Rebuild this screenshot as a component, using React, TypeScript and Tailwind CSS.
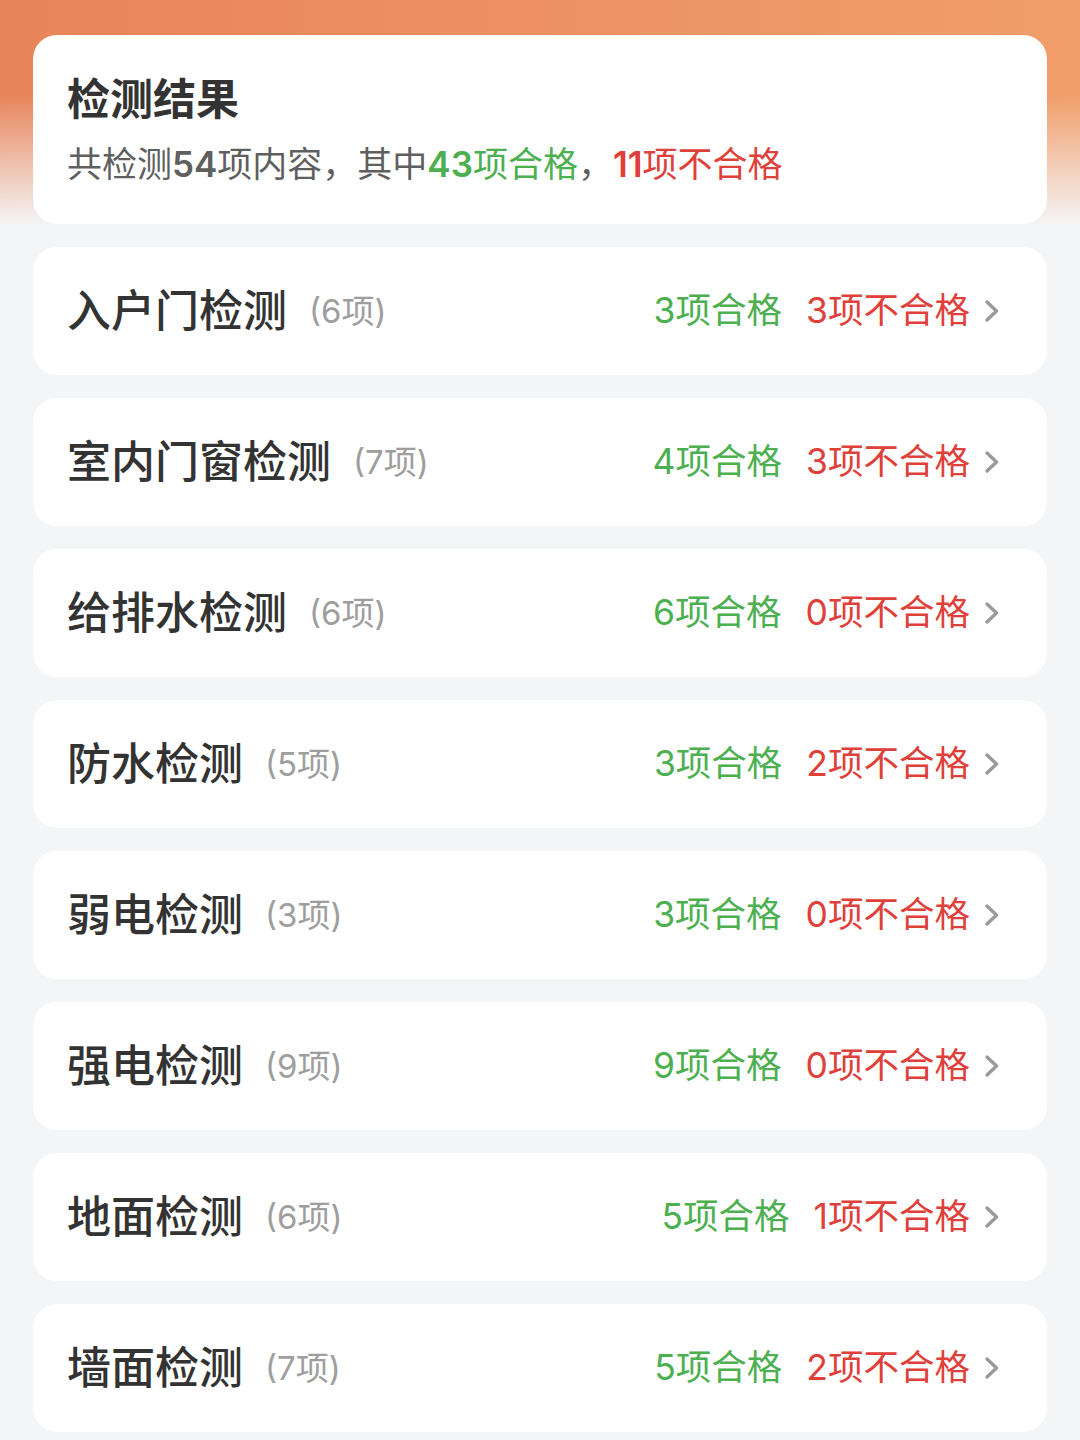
import React from "react";

type Row = { name: string; total: number; pass: number; fail: number };

const rows: Row[] = [
  { name: "入户门检测", total: 6, pass: 3, fail: 3 },
  { name: "室内门窗检测", total: 7, pass: 4, fail: 3 },
  { name: "给排水检测", total: 6, pass: 6, fail: 0 },
  { name: "防水检测", total: 5, pass: 3, fail: 2 },
  { name: "弱电检测", total: 3, pass: 3, fail: 0 },
  { name: "强电检测", total: 9, pass: 9, fail: 0 },
  { name: "地面检测", total: 6, pass: 5, fail: 1 },
  { name: "墙面检测", total: 7, pass: 5, fail: 2 },
];

function Chevron() {
  return (
    <svg width="16" height="26" viewBox="0 0 16 26" className="shrink-0">
      <polyline
        points="3,4 12.5,13 3,22"
        fill="none"
        stroke="#9a9a9a"
        strokeWidth="3.4"
        strokeLinecap="round"
        strokeLinejoin="round"
      />
    </svg>
  );
}

export default function App() {
  return (
    <div className="w-[1080px] h-[1440px] overflow-hidden bg-[#f4f5f7] bg-[linear-gradient(to_bottom,rgba(244,245,247,0)_95px,#f4f5f7_225px),linear-gradient(to_right,#e8845a,#f19e6a)] bg-no-repeat bg-[length:100%_240px] px-[33px] pt-[35px] font-['Inter','Noto_Sans_CJK_SC',sans-serif]">
      <div className="flex flex-col gap-[23px]">
        <div className="h-[189px] rounded-[24px] bg-white pl-[34px] pt-[36px] flex flex-col">
          <div className="text-[43px] leading-[56px] font-bold text-[#333333]">检测结果</div>
          <div className="mt-[13px] text-[35px] leading-[48px] text-[#5f5f5f] whitespace-nowrap">
            共检测<span className="font-semibold">54</span>项内容，其中
            <span className="text-[#4caf50]">
              <span className="font-semibold">43</span>项合格
            </span>
            ，
            <span className="text-[#e0403a]">
              <span className="font-semibold">11</span>项不合格
            </span>
          </div>
        </div>
        {rows.map((r) => (
          <div
            key={r.name}
            className="h-[128px] rounded-[24px] bg-white flex items-center pl-[34px] pr-[47px]"
          >
            <div className="flex items-center flex-1 min-w-0">
              <span className="text-[44px] leading-none font-medium text-[#333333] whitespace-nowrap">
                {r.name}
              </span>
              <span className="ml-[22px] text-[33px] leading-none text-[#9e9e9e] whitespace-nowrap">
                ({r.total}项)
              </span>
            </div>
            <div className="flex items-center whitespace-nowrap">
              <span className="text-[35.5px] leading-none text-[#4caf50]">{r.pass}项合格</span>
              <span className="ml-[24px] text-[35.5px] leading-none text-[#e0403a]">{r.fail}项不合格</span>
              <span className="ml-[14px] flex items-center">
                <Chevron />
              </span>
            </div>
          </div>
        ))}
      </div>
    </div>
  );
}
